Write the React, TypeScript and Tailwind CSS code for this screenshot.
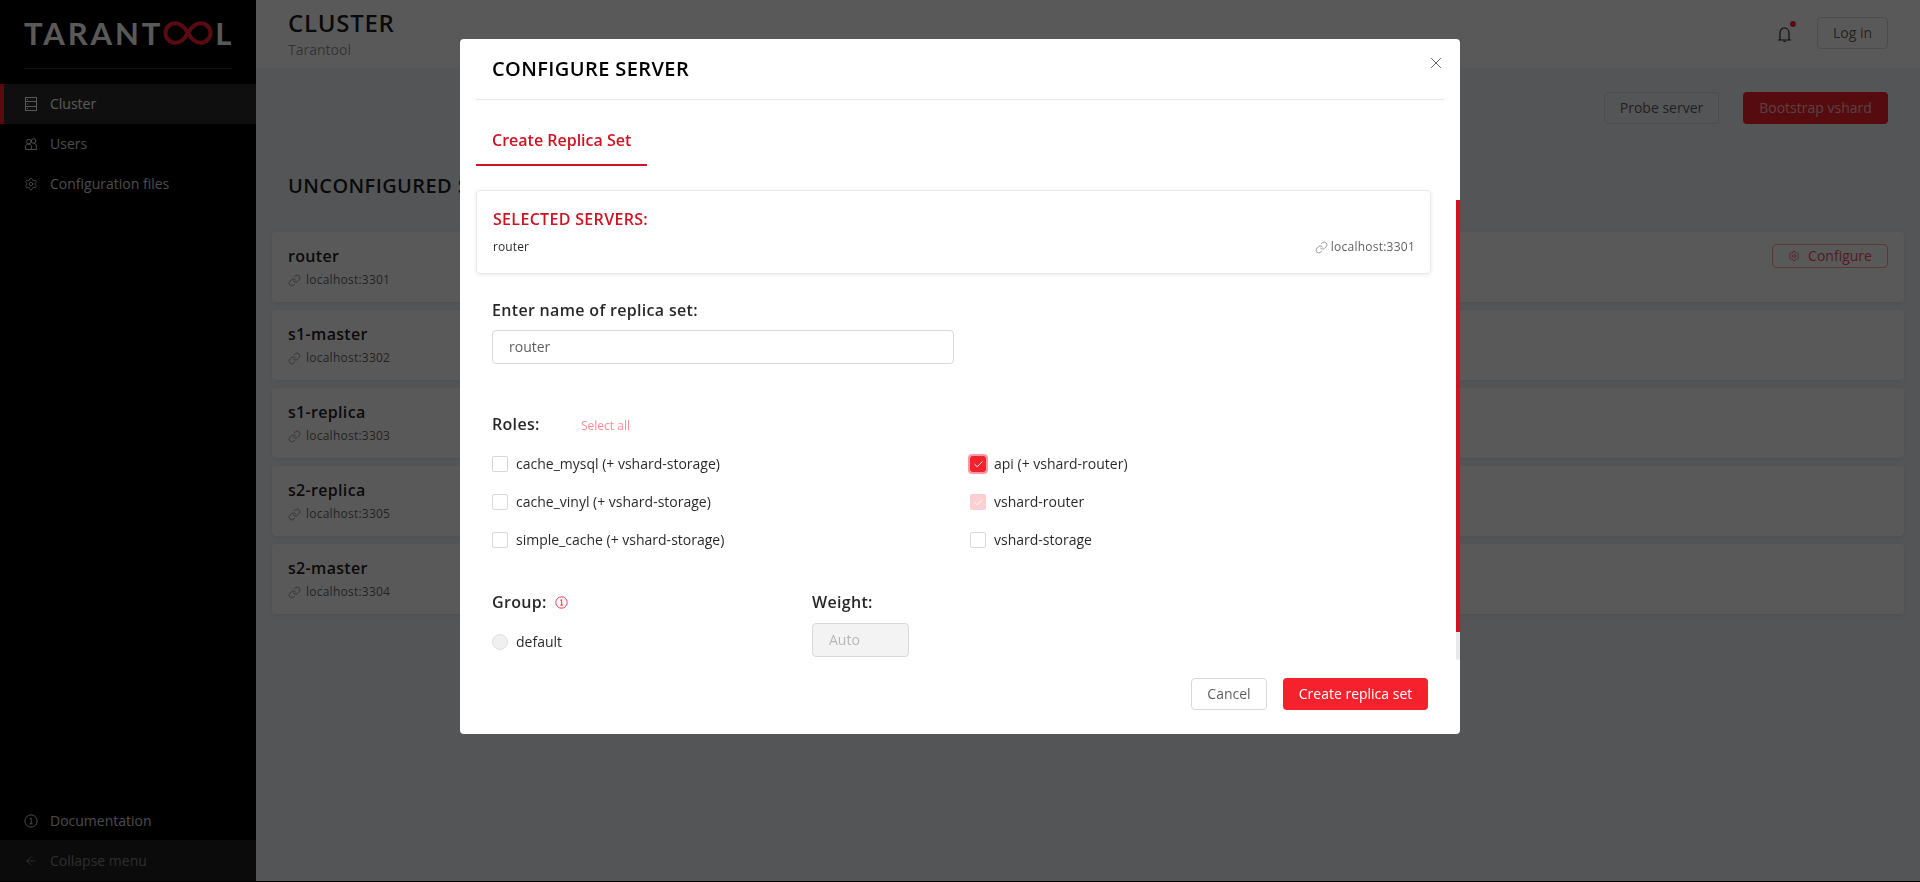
import { ArrowLeft, Check, Link, Settings, X } from 'lucide-react'

const servers = [
  { name: 'router', uri: 'localhost:3301', configure: true },
  { name: 's1-master', uri: 'localhost:3302' },
  { name: 's1-replica', uri: 'localhost:3303' },
  { name: 's2-replica', uri: 'localhost:3305' },
  { name: 's2-master', uri: 'localhost:3304' },
]

const leftRoles = ['cache_mysql (+ vshard-storage)', 'cache_vinyl (+ vshard-storage)', 'simple_cache (+ vshard-storage)']

function ServerIcon() {
  return (
    <svg width="12" height="14" viewBox="0 0 12 14" fill="none" stroke="currentColor" strokeWidth="1" className="shrink-0">
      <rect x="0.5" y="0.500" width="11" height="13" />
      <path d="M0.5 4.500h11M0.5 9.500h11" />
      <path d="M2 2.500h1M2 7h1M2 11.500h1" />
    </svg>
  )
}

function UsersIcon() {
  return (
    <svg width="12" height="12" viewBox="0 0 12 12" fill="none" stroke="currentColor" strokeWidth="1" className="shrink-0">
      <circle cx="3.800" cy="3.600" r="2.300" />
      <circle cx="8.600" cy="3" r="2.300" />
      <path d="M0.600 11.500V8.400c0-1.300 1-2.300 2.300-2.300h1.200c1.300 0 2.300 1 2.300 2.300v3.100zM6.500 11.500h4.900V7.800c0-1.300-1-2.400-2.400-2.400" />
    </svg>
  )
}

function BellIcon() {
  return (
    <svg width="13" height="17" viewBox="0 0 13 17" fill="none" stroke="currentColor" strokeWidth="1.200">
      <path d="M0 14h13M2 14V6.500a4.500 4.500 0 0 1 9 0V14" />
      <path d="M5.500 15.500h2" />
    </svg>
  )
}

function InfoIcon({ size, className }: { size: number; className?: string }) {
  return (
    <svg width={size} height={size} viewBox="0 0 16 16" fill="none" stroke="currentColor" strokeWidth="1.100" className={className}>
      <circle cx="8" cy="8" r="7" />
      <path d="M6.500 5.200 8.200 4.600v6.400M6.400 11.200h3.400" />
    </svg>
  )
}

function Logo() {
  return (
    <div className="flex items-center h-[24px] text-[31px] leading-none font-bold text-white font-['Lato',sans-serif]">
      <span className="tracking-[2.900px]">TARANT</span>
      <svg width="50" height="24" viewBox="0 0 50 24" fill="none" stroke="#ff2233" strokeWidth="4" className="shrink-0">
        <path d="M25 12C21 5 17 2.200 12.500 2.200 7 2.200 2.500 6.500 2.500 12s4.500 9.800 10 9.800C17 21.800 21 19 25 12c4-7 8-9.800 12.500-9.800 5.500 0 10 4.300 10 9.800s-4.500 9.800-10 9.800C33 21.800 29 19 25 12Z" />
      </svg>
      <span className="ml-[2px]">L</span>
    </div>
  )
}

function Checkbox({ state }: { state?: 'checked' | 'disabled' }) {
  if (state === 'checked') {
    return (
      <span className="flex items-center justify-center w-4 h-4 rounded-[2px] bg-[#f5222d] outline-2 outline-[#ff9aa2] text-white shrink-0">
        <Check size={11} strokeWidth={2} />
      </span>
    )
  }
  if (state === 'disabled') {
    return (
      <span className="flex items-center justify-center w-4 h-4 rounded-[2px] bg-[#fccfd2] text-white shrink-0">
        <Check size={11} strokeWidth={2} />
      </span>
    )
  }
  return <span className="w-4 h-4 rounded-[2px] border border-[#d9d9d9] bg-white shrink-0" />
}

function Role({ label, state }: { label: string; state?: 'checked' | 'disabled' }) {
  return (
    <div className="flex items-center gap-2 h-[22px] text-sm text-[#000000d9]">
      <Checkbox state={state} />
      <span>{label}</span>
    </div>
  )
}

function ConfigureModal() {
  return (
    <div className="fixed inset-0 bg-[#000000a6] pt-[39px] pl-[460px]">
      <div className="relative w-[1000px] h-[695px] rounded-[4px] bg-white overflow-hidden">
        <button className="absolute right-[15px] top-[15px] text-[#000000a6]">
          <X size={18} strokeWidth={1.25} />
        </button>
        <div className="absolute right-0 top-[161px] w-[4px] h-[460px] bg-[#e8e8e8] rounded-[2px]">
          <div className="w-[4px] h-[432px] bg-[#cf1322]" />
        </div>

        <div className="mx-[16px] h-[61px] border-b border-[#e8e8e8] pl-[16px] pt-[15px] text-[20px] leading-[30px] font-semibold text-[#000000] tracking-[0.4px]">
          CONFIGURE SERVER
        </div>

        <div className="mt-[26px] ml-[16px] w-[171px] h-[40px] border-b-2 border-[#cf1322] pl-[16px] pt-[2px] text-[16px] leading-[24px] font-semibold text-[#cf1322]">
          Create Replica Set
        </div>

        <div className="mt-[24px] ml-[16px] mr-[29px] h-[84px] rounded-[4px] border border-[#e8e8e8] shadow-[0_1px_4px_#00000014] px-[16px] pt-[16px]">
          <div className="text-[16px] leading-[24px] font-semibold text-[#cf1322] tracking-[0.32px]">SELECTED SERVERS:</div>
          <div className="flex items-center justify-between mt-[7px] text-[12px] leading-[18px]">
            <span className="text-[#000000d9] tracking-[0.1px]">router</span>
            <span className="flex items-center gap-[3px] mr-[-1px] text-[#000000a6] tracking-[0.24px]">
              <Link size={13} strokeWidth={1.1} />
              localhost:3301
            </span>
          </div>
        </div>

        <div className="ml-[32px] mt-[24px]">
          <div className="text-[16px] leading-[24px] font-semibold text-[#000000d9] tracking-[0.32px]">Enter name of replica set:</div>
          <div className="mt-[8px] w-[462px] h-[34px] rounded-[4px] border border-[#d9d9d9] pl-[16px] text-sm leading-[32px] text-[#000000a6]">
            router
          </div>

          <div className="flex items-center mt-[48px] h-[24px]">
            <span className="w-[89px] text-[16px] leading-[24px] font-semibold text-[#000000d9] tracking-[0.32px]">Roles:</span>
            <span className="mt-[3px] text-[12px] text-[#ff8a94]">Select all</span>
          </div>

          <div className="flex mt-[17px]">
            <div className="w-[478px] flex flex-col gap-[16px]">
              {leftRoles.map((r) => (
                <Role key={r} label={r} />
              ))}
            </div>
            <div className="flex flex-col gap-[16px]">
              <Role label="api (+ vshard-router)" state="checked" />
              <Role label="vshard-router" state="disabled" />
              <Role label="vshard-storage" />
            </div>
          </div>

          <div className="flex mt-[39px]">
            <div className="w-[320px]">
              <div className="flex items-center gap-[8px] h-[24px] text-[16px] font-semibold text-[#000000d9] tracking-[0.32px]">
                Group:
                <InfoIcon size={13} className="text-[#f5222d]" />
              </div>
              <div className="flex items-center gap-2 mt-[17px] h-[22px] text-sm text-[#000000d9]">
                <span className="w-4 h-4 rounded-full border border-[#e0e0e0] bg-[#f0f0f0]" />
                default
              </div>
            </div>
            <div>
              <div className="h-[24px] text-[16px] leading-[24px] font-semibold text-[#000000d9] tracking-[0.32px]">Weight:</div>
              <div className="mt-[9px] w-[97px] h-[34px] rounded-[4px] border border-[#d9d9d9] bg-[#f3f3f3] pl-[16px] text-sm leading-[32px] text-[#00000040]">
                Auto
              </div>
            </div>
          </div>
        </div>

        <div className="absolute right-[32px] bottom-[24px] flex gap-[16px]">
          <button className="w-[76px] h-[32px] rounded-[4px] border border-[#d9d9d9] text-sm text-[#000000a6]">Cancel</button>
          <button className="w-[145px] h-[32px] rounded-[4px] bg-[#f5222d] text-sm text-white">Create replica set</button>
        </div>
      </div>
    </div>
  )
}

export default function App() {
  return (
    <div className="h-[882px] overflow-hidden bg-black font-['Open_Sans',sans-serif]">
      <div className="flex h-[881px] bg-[#f0f2f5]">
        <aside className="flex flex-col w-[256px] shrink-0 bg-black">
          <div className="mx-[24px] h-[69px] border-b border-[#2a2a2a] pt-[21px]">
            <Logo />
          </div>
          <nav className="mt-[15px] flex-1 text-sm text-[#ffffffd9]">
            <div className="flex items-center gap-[13px] h-[40px] pl-[21px] border-l-4 border-[#ff2233] bg-[#2d2d2d] text-white">
              <ServerIcon />
              Cluster
            </div>
            <div className="flex items-center gap-[13px] h-[40px] pl-[25px]">
              <UsersIcon />
              Users
            </div>
            <div className="flex items-center gap-[12px] h-[40px] pl-[24px]">
              <Settings size={14} strokeWidth={1.5} className="shrink-0" />
              Configuration files
            </div>
          </nav>
          <div className="flex items-center gap-[12px] h-[40px] pl-[24px] pt-[2px] text-sm text-[#ffffffd9]">
            <InfoIcon size={14} />
            Documentation
          </div>
          <div className="flex items-center gap-[12px] h-[41px] pl-[24px] pt-[1px] text-sm bg-[#212121] text-[#ffffff73]">
            <ArrowLeft size={14} strokeWidth={1.5} />
            Collapse menu
          </div>
        </aside>

        <main className="flex-1 min-w-0">
          <header className="flex justify-between h-[68px] bg-white px-[32px]">
            <div className="pt-[7px]">
              <div className="text-[24px] leading-[32px] font-semibold text-[#000000e6] tracking-[0.72px]">CLUSTER</div>
              <div className="mt-[1px] text-sm leading-[20px] text-[#00000073]">Tarantool</div>
            </div>
            <div className="flex items-center gap-[26px] pb-[2px]">
              <span className="relative flex text-[#000000d9] mt-[3px]">
                <BellIcon />
                <span className="absolute -top-[5px] right-[-5px] w-[6px] h-[6px] rounded-full bg-[#ff2233]" />
              </span>
              <button className="w-[71px] h-[32px] rounded-[4px] border border-[#d9d9d9] text-sm text-[#000000a6]">Log in</button>
            </div>
          </header>

          <div className="flex justify-end gap-[24px] mt-[24px] pr-[32px]">
            <button className="w-[115px] h-[32px] rounded-[4px] border border-[#d9d9d9] text-sm text-[#000000a6]">Probe server</button>
            <button className="w-[145px] h-[32px] rounded-[4px] bg-[#f5222d] text-sm text-[#ffffffb3]">Bootstrap vshard</button>
          </div>

          <h2 className="mt-[47px] ml-[32px] text-[20px] leading-[30px] font-semibold text-[#000000e6] tracking-[0.4px]">UNCONFIGURED SERVERS</h2>

          <div className="flex flex-col gap-[8px] mt-[31px] mx-[16px]">
            {servers.map((s) => (
              <div key={s.name} className="flex justify-between h-[70px] rounded-[4px] bg-white shadow-[0_1px_4px_#00000014] pl-[16px] pr-[16px] pt-[12px]">
                <div>
                  <div className="text-[16px] leading-[24px] font-semibold text-[#000000e6] tracking-[0.32px]">{s.name}</div>
                  <div className="flex items-center gap-[5px] mt-[2px] text-[12px] leading-[20px] text-[#000000a6] tracking-[0.24px]">
                    <Link size={13} strokeWidth={1.1} />
                    {s.uri}
                  </div>
                </div>
                {s.configure && (
                  <button className="flex items-center justify-center gap-[8px] w-[116px] h-[24px] rounded-[4px] border border-[#ffa39e] text-[#f0505a] text-sm">
                    <Settings size={12} strokeWidth={1.5} />
                    Configure
                  </button>
                )}
              </div>
            ))}
          </div>
        </main>
      </div>

      <ConfigureModal />
    </div>
  )
}
